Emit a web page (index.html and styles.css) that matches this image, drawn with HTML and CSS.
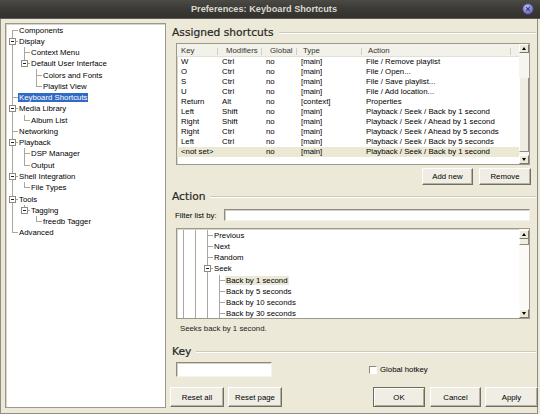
FILE: index.html
```html
<!DOCTYPE html>
<html lang="en">

<head>
    <meta charset="UTF-8">
    <meta name="viewport" content="width=device-width, initial-scale=1.0">
    <title>Preferences: Keyboard Shortcuts</title>
    <link rel="stylesheet" href="styles.css">
</head>

<body>
    <div class="window">

        <!-- title bar -->
        <div class="titlebar">
            <span class="title">Preferences: Keyboard Shortcuts</span>
            <svg class="close" width="12" height="12" viewBox="0 0 12 12">
                <defs>
                    <radialGradient id="cg" cx="40%" cy="35%" r="70%">
                        <stop offset="0" stop-color="#c4c4f2" />
                        <stop offset="1" stop-color="#5a5ab4" />
                    </radialGradient>
                </defs>
                <circle cx="6" cy="6" r="5.4" fill="url(#cg)" stroke="#3b3b78" stroke-width="0.6" />
                <path d="M4.2 4.2l3.6 3.6M7.8 4.2l-3.6 3.6" stroke="#34346e" stroke-width="1.1" />
            </svg>
        </div>

        <div class="content">

            <!-- left page tree -->
            <div class="pages">
                <div class="row"><i class="c first"></i><span class="t">Components</span></div>
                <div class="row"><i class="c tee"><b class="box"></b></i><span class="t">Display</span></div>
                <div class="row"><i class="c pipe"></i><i class="c tee"></i><span class="t">Context Menu</span></div>
                <div class="row"><i class="c pipe"></i><i class="c ell"><b class="box"></b></i><span class="t">Default User Interface</span></div>
                <div class="row"><i class="c pipe"></i><i class="c"></i><i class="c tee"></i><span class="t">Colors and Fonts</span></div>
                <div class="row"><i class="c pipe"></i><i class="c"></i><i class="c ell"></i><span class="t">Playlist View</span></div>
                <div class="row"><i class="c tee"></i><span class="t sel">Keyboard Shortcuts</span></div>
                <div class="row"><i class="c tee"><b class="box"></b></i><span class="t">Media Library</span></div>
                <div class="row"><i class="c pipe"></i><i class="c ell"></i><span class="t">Album List</span></div>
                <div class="row"><i class="c tee"></i><span class="t">Networking</span></div>
                <div class="row"><i class="c tee"><b class="box"></b></i><span class="t">Playback</span></div>
                <div class="row"><i class="c pipe"></i><i class="c tee"></i><span class="t">DSP Manager</span></div>
                <div class="row"><i class="c pipe"></i><i class="c ell"></i><span class="t">Output</span></div>
                <div class="row"><i class="c tee"><b class="box"></b></i><span class="t">Shell Integration</span></div>
                <div class="row"><i class="c pipe"></i><i class="c ell"></i><span class="t">File Types</span></div>
                <div class="row"><i class="c tee"><b class="box"></b></i><span class="t">Tools</span></div>
                <div class="row"><i class="c pipe"></i><i class="c ell"><b class="box"></b></i><span class="t">Tagging</span></div>
                <div class="row"><i class="c pipe"></i><i class="c"></i><i class="c ell"></i><span class="t">freedb Tagger</span></div>
                <div class="row"><i class="c ell"></i><span class="t">Advanced</span></div>
            </div>

            <!-- right side -->
            <div class="main">

                <div class="heading heading-top"><span>Assigned shortcuts</span><i class="groove"></i></div>

                <div class="listbox">
                    <div class="lb-main">
                        <div class="lhead">
                            <span>Key</span><span>Modifiers</span><span>Global</span><span>Type</span><span>Action</span>
                        </div>
                        <div class="lrow"><span>W</span><span>Ctrl</span><span>no</span><span>[main]</span><span>File / Remove playlist</span></div>
                        <div class="lrow"><span>O</span><span>Ctrl</span><span>no</span><span>[main]</span><span>File / Open...</span></div>
                        <div class="lrow"><span>S</span><span>Ctrl</span><span>no</span><span>[main]</span><span>File / Save playlist...</span></div>
                        <div class="lrow"><span>U</span><span>Ctrl</span><span>no</span><span>[main]</span><span>File / Add location...</span></div>
                        <div class="lrow"><span>Return</span><span>Alt</span><span>no</span><span>[context]</span><span>Properties</span></div>
                        <div class="lrow"><span>Left</span><span>Shift</span><span>no</span><span>[main]</span><span>Playback / Seek / Back by 1 second</span></div>
                        <div class="lrow"><span>Right</span><span>Shift</span><span>no</span><span>[main]</span><span>Playback / Seek / Ahead by 1 second</span></div>
                        <div class="lrow"><span>Right</span><span>Ctrl</span><span>no</span><span>[main]</span><span>Playback / Seek / Ahead by 5 seconds</span></div>
                        <div class="lrow"><span>Left</span><span>Ctrl</span><span>no</span><span>[main]</span><span>Playback / Seek / Back by 5 seconds</span></div>
                        <div class="lrow current"><span>&lt;not set&gt;</span><span></span><span>no</span><span>[main]</span><span>Playback / Seek / Back by 1 second</span></div>
                    </div>
                    <div class="vscroll">
                        <span class="sbtn"><b class="up"></b></span>
                        <span class="track" style="flex-basis: 25px"></span>
                        <span class="thumb" style="height: 74px"></span>
                        <span class="track grow"></span>
                        <span class="sbtn"><b class="down"></b></span>
                    </div>
                </div>

                <div class="btnrow">
                    <button class="btn btn-sm" style="width: 51px">Add new</button>
                    <button class="btn btn-sm" style="width: 52px">Remove</button>
                </div>

                <div class="heading heading-action"><span>Action</span><i class="groove"></i></div>

                <div class="filter">
                    <label>Filter list by:</label>
                    <span class="field filter-field"></span>
                </div>

                <div class="actions">
                    <div class="tree-main">
                        <div class="row"><i class="c pipe"></i><i class="c pipe"></i><i class="c tee"></i><span class="t">Previous</span></div>
                        <div class="row"><i class="c pipe"></i><i class="c pipe"></i><i class="c tee"></i><span class="t">Next</span></div>
                        <div class="row"><i class="c pipe"></i><i class="c pipe"></i><i class="c tee"></i><span class="t">Random</span></div>
                        <div class="row"><i class="c pipe"></i><i class="c pipe"></i><i class="c tee"><b class="box"></b></i><span class="t">Seek</span></div>
                        <div class="row"><i class="c pipe"></i><i class="c pipe"></i><i class="c pipe"></i><i class="c tee"></i><span class="t inactive">Back by 1 second</span></div>
                        <div class="row"><i class="c pipe"></i><i class="c pipe"></i><i class="c pipe"></i><i class="c tee"></i><span class="t">Back by 5 seconds</span></div>
                        <div class="row"><i class="c pipe"></i><i class="c pipe"></i><i class="c pipe"></i><i class="c tee"></i><span class="t">Back by 10 seconds</span></div>
                        <div class="row"><i class="c pipe"></i><i class="c pipe"></i><i class="c pipe"></i><i class="c tee"></i><span class="t">Back by 30 seconds</span></div>
                    </div>
                    <div class="vscroll">
                        <span class="sbtn"><b class="up"></b></span>
                        <span class="thumb" style="height: 6px"></span>
                        <span class="track grow"></span>
                        <span class="sbtn"><b class="down"></b></span>
                    </div>
                </div>

                <p class="desc">Seeks back by 1 second.</p>

                <div class="heading heading-key"><span>Key</span><i class="groove"></i></div>

                <div class="keyrow">
                    <span class="field key-field"></span>
                    <span class="check"></span>
                    <span class="check-label">Global hotkey</span>
                </div>

                <div class="bottom">
                    <button class="btn" style="width: 54px">Reset all</button>
                    <button class="btn" style="width: 54px">Reset page</button>
                    <span class="spacer"></span>
                    <button class="btn default" style="width: 52px">OK</button>
                    <button class="btn" style="width: 51px">Cancel</button>
                    <button class="btn" style="width: 53px">Apply</button>
                </div>

            </div>
        </div>
    </div>
</body>

</html>
```

FILE: styles.css
```css
body {
    margin: 0;
    background: #ece9d8;
    font-family: "Liberation Sans", Arial, sans-serif;
    font-size: 7.8px;
    color: #000;
}

.window {
    width: 540px;
    height: 414px;
    display: flex;
    flex-direction: column;
    overflow: hidden;
}

/* title bar */
.titlebar {
    height: 19px;
    flex: none;
    display: flex;
    align-items: center;
    background: linear-gradient(#4b4a45, #3c3b37 45%, #32312d);
    border-bottom: 1px solid #5b5a54;
    box-sizing: border-box;
}

.title {
    flex: 1;
    text-align: center;
    padding-left: 6px;
    color: #dcd8cf;
    font-weight: bold;
    font-size: 9.2px;
}

.close {
    margin-right: 6px;
    margin-top: -1px;
}

/* frame */
.content {
    flex: 1;
    display: flex;
    padding: 4px 0 0 4px;
    margin-right: 2px;
    border-left: 1px solid #8f8d82;
    border-right: 1px solid #8f8d82;
    border-bottom: 1px solid #8f8d82;
}

/* left page tree */
.pages {
    width: 161px;
    height: 385px;
    box-sizing: border-box;
    background: #fff;
    border: 1px solid #9c998b;
    box-shadow: inset 1px 1px 0 #d9d6c9;
    padding-top: 0.4px;
    flex: none;
}

.row {
    display: flex;
    height: 11.28px;
    white-space: nowrap;
    align-items: center;
}

.c {
    flex: none;
    width: 12px;
    align-self: stretch;
    display: flex;
    align-items: center;
}

.pipe {
    background: linear-gradient(#aaa89e, #aaa89e) 6px 0 / 1px 100% no-repeat;
}

.tee {
    background:
        linear-gradient(#aaa89e, #aaa89e) 6px 0 / 1px 100% no-repeat,
        linear-gradient(#aaa89e, #aaa89e) 6px 50% / 6px 1px no-repeat;
}

.ell {
    background:
        linear-gradient(#aaa89e, #aaa89e) 6px 0 / 1px 50% no-repeat,
        linear-gradient(#aaa89e, #aaa89e) 6px 50% / 6px 1px no-repeat;
}

.first {
    background:
        linear-gradient(#aaa89e, #aaa89e) 6px 100% / 1px 50% no-repeat,
        linear-gradient(#aaa89e, #aaa89e) 6px 50% / 6px 1px no-repeat;
}

.box {
    width: 7px;
    height: 7px;
    margin-left: 3px;
    box-sizing: border-box;
    border: 1px solid #8d8b84;
    background: #fff linear-gradient(#222, #222) center / 3px 1px no-repeat;
}

.t {
    padding: 0 1px;
    line-height: 9px;
}

.sel {
    background: #316ac5;
    color: #fff;
}

.inactive {
    background: #ece9d8;
}

/* right column */
.main {
    flex: 1;
    margin-left: 4px;
    display: flex;
    flex-direction: column;
}

.heading {
    display: flex;
    align-items: center;
    height: 13px;
    padding-left: 2px;
    margin-right: 2px;
    font-family: "DejaVu Sans", sans-serif;
    font-size: 10.7px;
    color: #262626;
    -webkit-text-stroke: 0.2px #262626;
}

.groove {
    flex: 1;
    height: 0;
    border-top: 1px solid #cdcabb;
    border-bottom: 1px solid #fff;
    margin-left: 5px;
}

.heading-top {
    margin-top: 3px;
}

.heading-action {
    margin-top: 5px;
}

.heading-key {
    margin-top: 11px;
}

/* shortcut list */
.listbox {
    display: flex;
    margin-top: 4px;
    margin-left: 6px;
    width: 354px;
    height: 122px;
    box-sizing: border-box;
    background: #fff;
    border: 1px solid #9c998b;
    box-shadow: inset 1px 1px 0 #d9d6c9;
}

.lb-main {
    flex: 1;
}

.lhead,
.lrow {
    display: grid;
    grid-template-columns: 41px 44px 35px 65px 149px;
    white-space: nowrap;
}

.lhead {
    height: 13px;
    align-items: center;
    background: #f3f2ea;
    border-bottom: 1px solid #e4e1d4;
    box-sizing: border-box;
    color: #333;
}

.lhead span {
    background: linear-gradient(#d1cebf, #d1cebf) right 2px / 1px 8px no-repeat;
    padding-left: 6px;
}

.lhead span:nth-child(1) {
    padding-left: 4px;
}

.lhead span:nth-child(2),
.lhead span:nth-child(3) {
    padding-left: 8px;
}

.lrow {
    height: 10px;
    line-height: 10px;
}

.lrow span {
    padding-left: 4px;
    overflow: hidden;
}

.current {
    background: #ebe9d4;
}

/* scrollbars */
.vscroll {
    width: 10px;
    flex: none;
    display: flex;
    flex-direction: column;
    background: #f6f5ef;
}

.sbtn {
    height: 9px;
    flex: none;
    box-sizing: border-box;
    background: #ece9d8;
    border: 1px solid;
    border-color: #fff #7b796e #7b796e #fff;
    display: flex;
    align-items: center;
    justify-content: center;
}

.up {
    border-left: 2px solid transparent;
    border-right: 2px solid transparent;
    border-bottom: 3px solid #000;
}

.down {
    border-left: 2px solid transparent;
    border-right: 2px solid transparent;
    border-top: 3px solid #000;
}

.track {
    flex: none;
}

.track.grow {
    flex: 1;
}

.thumb {
    flex: none;
    box-sizing: border-box;
    background: #efede2;
    border-right: 1px solid #8e8c80;
    border-bottom: 1px solid #8e8c80;
    border-left: 1px solid #fff;
}

/* buttons */
.btnrow {
    display: flex;
    justify-content: flex-end;
    gap: 6px;
    margin-top: 3px;
    padding-right: 7px;
}

.btn {
    height: 20px;
    padding: 0;
    box-sizing: border-box;
    font: inherit;
    color: #000;
    background: #efede4;
    border: 1px solid;
    border-color: #fff #716f64 #716f64 #fff;
    box-shadow: inset -1px -1px 0 #b5b2a3;
}

.btn-sm {
    height: 17px;
}

.btn.default {
    border-color: #6d6b60;
    box-shadow: inset 1px 1px 0 #fff, inset -1px -1px 0 #aca899;
}

/* filter */
.filter {
    display: flex;
    align-items: center;
    margin-top: 6px;
    height: 12px;
}

.filter label {
    margin-left: 5px;
    width: 49px;
}

.field {
    display: block;
    box-sizing: border-box;
    background: #fff;
    border: 1px solid;
    border-color: #8e8b7e #f4f3ec #f4f3ec #8e8b7e;
    box-shadow: inset 1px 1px 0 #d4d1c4;
}

.filter-field {
    width: 306px;
    height: 12px;
}

/* action tree */
.actions {
    display: flex;
    margin-top: 7px;
    margin-left: 6px;
    width: 354px;
    height: 91px;
    box-sizing: border-box;
    background: #fff;
    border: 1px solid #9c998b;
    box-shadow: inset 1px 1px 0 #d9d6c9;
}

.tree-main {
    flex: 1;
    padding-top: 0.5px;
    overflow: hidden;
}

.actions .vscroll {
    padding-top: 1px;
    background: #fbfaf6;
}

.desc {
    margin: 5px 0 0 10px;
    height: 10px;
    line-height: 10px;
    color: #222;
}

/* key */
.keyrow {
    display: flex;
    align-items: center;
    margin-top: 4px;
    height: 15px;
}

.key-field {
    margin-left: 6px;
    width: 96px;
    height: 15px;
}

.check {
    margin-left: 97px;
    width: 8px;
    height: 8px;
    box-sizing: border-box;
    background: #fff;
    border: 1px solid;
    border-color: #8e8b7e #fff #fff #8e8b7e;
}

.check-label {
    margin-left: 3px;
}

.bottom {
    display: flex;
    gap: 4px;
    margin-top: 10px;
}

.spacer {
    flex: none;
    width: 83px;
}

.bottom .default {
    margin-right: 1px;
}
```
